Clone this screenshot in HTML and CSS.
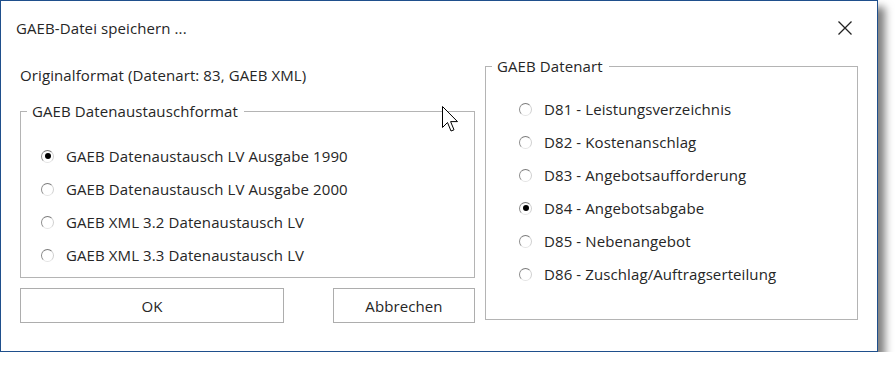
FILE: index.html
```html
<!DOCTYPE html>
<html lang="de">
<head>
    <meta charset="UTF-8">
    <meta name="viewport" content="width=device-width, initial-scale=1.0">
    <title>GAEB-Datei speichern</title>
    <link rel="stylesheet" href="styles.css">
</head>
<body>
    <div class="window">
        <div class="titlebar">
            <span class="title">GAEB-Datei speichern ...</span>
            <svg class="close" width="16" height="16" viewBox="0 0 16 16">
                <path d="M1.5 1.5 L14.5 14.5 M14.5 1.5 L1.5 14.5" stroke="#222" stroke-width="1.3" fill="none"/>
            </svg>
        </div>

        <div class="content">
            <div class="left-col">
                <div class="orig">Originalformat (Datenart: 83, GAEB XML)</div>

                <fieldset class="group group-format">
                    <legend>GAEB Datenaustauschformat</legend>
                    <div class="options">
                        <label class="option"><span class="radio checked"></span>GAEB Datenaustausch LV Ausgabe 1990</label>
                        <label class="option"><span class="radio"></span>GAEB Datenaustausch LV Ausgabe 2000</label>
                        <label class="option"><span class="radio"></span>GAEB XML 3.2 Datenaustausch LV</label>
                        <label class="option"><span class="radio"></span>GAEB XML 3.3 Datenaustausch LV</label>
                    </div>
                </fieldset>

                <div class="buttons">
                    <button class="btn btn-ok">OK</button>
                    <button class="btn btn-cancel">Abbrechen</button>
                </div>
            </div>

            <fieldset class="group group-art">
                <legend>GAEB Datenart</legend>
                <div class="options">
                    <label class="option"><span class="radio"></span>D81 - Leistungsverzeichnis</label>
                    <label class="option"><span class="radio"></span>D82 - Kostenanschlag</label>
                    <label class="option"><span class="radio"></span>D83 - Angebotsaufforderung</label>
                    <label class="option"><span class="radio checked"></span>D84 - Angebotsabgabe</label>
                    <label class="option"><span class="radio"></span>D85 - Nebenangebot</label>
                    <label class="option"><span class="radio"></span>D86 - Zuschlag/Auftragserteilung</label>
                </div>
            </fieldset>
        </div>

        <!-- mouse pointer -->
        <svg class="cursor" width="18" height="28" viewBox="0 0 18 28">
            <path d="M0.5 0.5 L0.5 21.5 L5.5 16.5 L9 25 L12 23.8 L8.6 15.6 L15.5 15.6 Z" fill="#fff" stroke="#000" stroke-width="1" stroke-linejoin="miter"/>
        </svg>
    </div>
</body>
</html>
```

FILE: styles.css
```css
body {
    margin: 0;
    background-color: #ffffff;
    font-family: "Open Sans", "Noto Sans", sans-serif;
    font-size: 15px;
    letter-spacing: 0.1px;
    color: #262626;
}

.window {
    position: relative;
    width: 876px;
    height: 350px;
    border: 1px solid #1f4f8c;
    background-color: #ffffff;
    box-shadow: 7px 7px 8px rgba(0, 0, 0, 0.5);
}

.titlebar {
    height: 56px;
    display: flex;
    align-items: center;
    justify-content: space-between;
    padding: 0 24px 2px 15px;
    box-sizing: border-box;
}

.content {
    display: grid;
    grid-template-columns: 455px 373px;
    column-gap: 10px;
    padding-left: 19px;
}

.left-col {
    display: flex;
    flex-direction: column;
}

.orig {
    height: 20px;
    line-height: 20px;
    margin-top: 8px;
}

.group {
    margin: 0;
    border: 1px solid #b4b4b4;
    padding: 0;
    box-sizing: border-box;
}

.group legend {
    padding: 0 6px 0 5px;
    margin-left: 6px;
    line-height: 20px;
}

.options {
    display: flex;
    flex-direction: column;
    gap: 13px;
}

.group-format {
    margin-top: 16px;
    height: 177px;
}

.group-format .options {
    padding: 25px 0 0 20px;
}

.group-art {
    margin-top: -1px;
    height: 264px;
}

.group-art .options {
    padding: 23px 0 0 33px;
}

.option {
    display: flex;
    align-items: center;
    height: 20px;
    line-height: 20px;
}

.radio {
    width: 11px;
    height: 11px;
    border-radius: 50%;
    border: 1px solid;
    border-color: #7c7c7c #d0d0d0 #e4e4e4 #8c8c8c;
    background-color: #fff;
    margin-right: 12px;
    display: inline-flex;
    align-items: center;
    justify-content: center;
    flex-shrink: 0;
}

.radio.checked::after {
    content: "";
    width: 6px;
    height: 6px;
    border-radius: 50%;
    background-color: #000;
}

.buttons {
    display: flex;
    justify-content: space-between;
    margin-top: 10px;
}

.btn {
    height: 35px;
    border: 1px solid #adadad;
    background-color: #ffffff;
    font-family: "Open Sans", "Noto Sans", sans-serif;
    font-size: 15px;
    letter-spacing: 0.1px;
    color: #262626;
    padding: 0;
}

.btn-ok {
    width: 264px;
}

.btn-cancel {
    width: 142px;
}

.cursor {
    position: absolute;
    left: 441px;
    top: 105px;
}
```
